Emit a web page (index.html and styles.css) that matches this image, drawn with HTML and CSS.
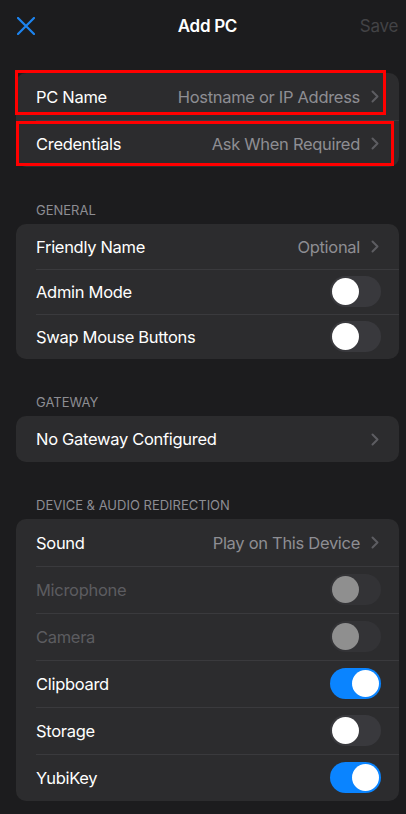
FILE: index.html
```html
<!DOCTYPE html>
<html lang="en">
<head>
  <meta charset="UTF-8">
  <meta name="viewport" content="width=device-width, initial-scale=1.0">
  <title>Add PC</title>
  <link rel="stylesheet" href="styles.css">
</head>
<body>
  <header class="nav">
    <button class="nav-close" aria-label="Close">
      <svg width="18" height="18" viewBox="0 0 18 18">
        <path d="M1 1 L17 17 M17 1 L1 17" stroke="#1d84f0" stroke-width="2.2" stroke-linecap="round" fill="none"/>
      </svg>
    </button>
    <h1 class="nav-title">Add PC</h1>
    <span class="nav-save">Save</span>
  </header>

  <main>
    <!-- connection -->
    <div class="card card-top">
      <div class="row">
        <span class="label">PC Name</span>
        <span class="value">Hostname or IP Address</span>
        <svg class="chevron" width="8" height="13" viewBox="0 0 8 13"><polyline points="1.5,1.5 6.5,6.5 1.5,11.5"/></svg>
        <span class="mark mark-name"></span>
      </div>
      <div class="row">
        <span class="label">Credentials</span>
        <span class="value">Ask When Required</span>
        <svg class="chevron" width="8" height="13" viewBox="0 0 8 13"><polyline points="1.5,1.5 6.5,6.5 1.5,11.5"/></svg>
        <span class="mark mark-cred"></span>
      </div>
    </div>

    <h2 class="section">General</h2>
    <div class="card card-compact">
      <div class="row">
        <span class="label">Friendly Name</span>
        <span class="value">Optional</span>
        <svg class="chevron" width="8" height="13" viewBox="0 0 8 13"><polyline points="1.5,1.5 6.5,6.5 1.5,11.5"/></svg>
      </div>
      <div class="row row-toggle">
        <span class="label">Admin Mode</span>
        <span class="switch"><span class="knob"></span></span>
      </div>
      <div class="row row-toggle">
        <span class="label">Swap Mouse Buttons</span>
        <span class="switch"><span class="knob"></span></span>
      </div>
    </div>

    <h2 class="section">Gateway</h2>
    <div class="card card-single">
      <div class="row">
        <span class="label">No Gateway Configured</span>
        <span class="value"></span>
        <svg class="chevron" width="8" height="13" viewBox="0 0 8 13"><polyline points="1.5,1.5 6.5,6.5 1.5,11.5"/></svg>
      </div>
    </div>

    <h2 class="section">Device &amp; Audio Redirection</h2>
    <div class="card">
      <div class="row">
        <span class="label">Sound</span>
        <span class="value">Play on This Device</span>
        <svg class="chevron" width="8" height="13" viewBox="0 0 8 13"><polyline points="1.5,1.5 6.5,6.5 1.5,11.5"/></svg>
      </div>
      <div class="row row-toggle disabled">
        <span class="label">Microphone</span>
        <span class="switch"><span class="knob"></span></span>
      </div>
      <div class="row row-toggle disabled">
        <span class="label">Camera</span>
        <span class="switch"><span class="knob"></span></span>
      </div>
      <div class="row row-toggle">
        <span class="label">Clipboard</span>
        <span class="switch on"><span class="knob"></span></span>
      </div>
      <div class="row row-toggle">
        <span class="label">Storage</span>
        <span class="switch"><span class="knob"></span></span>
      </div>
      <div class="row row-toggle">
        <span class="label">YubiKey</span>
        <span class="switch on"><span class="knob"></span></span>
      </div>
    </div>
  </main>
</body>
</html>
```

FILE: styles.css
```css
body {
  margin: 0;
  background-color: #1c1c1e;
  color: #fff;
  font-family: Inter, "Noto Sans", sans-serif;
}

.nav {
  display: flex;
  align-items: center;
  height: 52px;
  padding: 0 8px 0 17px;
}
.nav-close {
  display: flex;
  padding: 0;
  border: none;
  background: none;
}
.nav-title {
  flex: 1;
  margin: 0;
  font-size: 17px;
  font-weight: 600;
  letter-spacing: -0.3px;
  text-align: center;
  padding-left: 20px;
}
.nav-save {
  font-size: 17px;
  letter-spacing: -0.3px;
  color: #434346;
}

main {
  padding: 0 7px 40px 16px;
}

.card {
  background-color: #2c2c2e;
  border-radius: 10px;
}
.card-top {
  margin-top: 21px;
}

.row {
  position: relative;
  display: flex;
  align-items: center;
  height: 47px;
  padding: 0 20px;
  font-size: 16.5px;
  letter-spacing: -0.3px;
}
.row + .row {
  background: linear-gradient(#3a3a3d, #3a3a3d) 20px 0 / 100% 1px no-repeat;
}
.card-compact .row {
  height: 45px;
}
.card-single .row {
  height: 46px;
}
.row-toggle {
  padding-right: 18px;
}

.label {
  flex: 1;
}
.value {
  color: #8e8e93;
  margin-right: 11px;
}
.chevron {
  fill: none;
  stroke: #5d5d62;
  stroke-width: 2;
  stroke-linecap: round;
  stroke-linejoin: round;
}

.section {
  margin: 35px 0 6px;
  padding-left: 20px;
  font-size: 13px;
  line-height: 16px;
  font-weight: 400;
  text-transform: uppercase;
  color: #8d8d93;
}

/* toggles */
.switch {
  display: flex;
  justify-content: flex-start;
  width: 51px;
  height: 31px;
  padding: 2px;
  box-sizing: border-box;
  border-radius: 16px;
  background-color: #39393d;
}
.switch.on {
  justify-content: flex-end;
  background-color: #0a84ff;
}
.knob {
  width: 27px;
  height: 27px;
  border-radius: 50%;
  background-color: #fff;
}
.disabled .label {
  color: #5c5c60;
}
.disabled .switch {
  background-color: #333336;
}
.disabled .knob {
  background-color: #8f8f8f;
}

/* red highlight annotations */
.mark {
  position: absolute;
  box-sizing: border-box;
  border: 3px solid #ff0000;
  height: 45px;
}
.mark-name {
  left: -1px;
  top: -3px;
  width: 371px;
}
.mark-cred {
  left: 0;
  top: 1px;
  width: 378px;
}
```
